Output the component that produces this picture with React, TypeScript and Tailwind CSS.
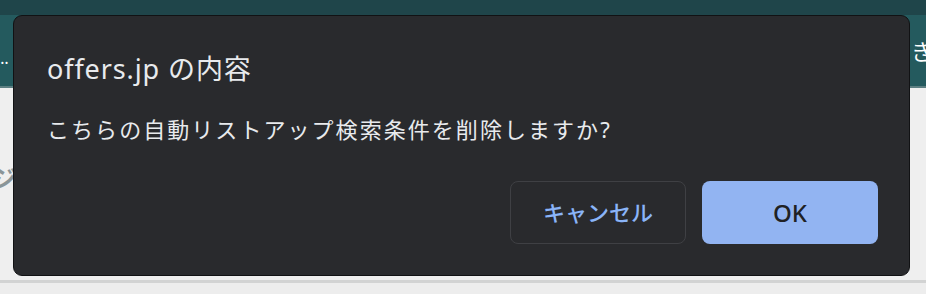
export default function App() {
  return (
    <div
      className="relative w-[926px] h-[294px] overflow-hidden bg-[#ededed]"
      style={{ fontFamily: '"Noto Sans", "Noto Sans CJK JP", sans-serif' }}
    >
      {/* page behind the dialog */}
      <div className="h-[15px] bg-[#1f454a]" />
      <div className="flex h-[71px] items-center justify-between bg-[#245a5e] pt-[14px] text-white">
        <span className="-ml-[4px] text-[16px] leading-none">…</span>
        <span className="-mr-[7px] -mt-[14px] text-[22px] leading-none">き</span>
      </div>
      <div className="h-[2px] bg-[#5c7f82]" />
      <div className="flex h-[192px] items-center bg-[#efefef] pb-[10px]">
        <span className="-ml-[8px] text-[24px] font-bold leading-none text-[#8a9598]">ジ</span>
      </div>
      <div className="h-[3px] bg-[#d2d3d3]" />

      {/* dialog */}
      <div className="absolute left-[13px] top-[15px] flex w-[897px] h-[261px] flex-col rounded-[9px] border border-[#111214] bg-[#292a2d] pl-[33px] pr-[31px] pt-[34px]">
        <div className="text-[27px] leading-[38px] tracking-[0.9px] text-[#e8eaed]">offers.jp の内容</div>
        <div className="mt-[25px] text-[22px] leading-[32px] text-[#e8eaed] tracking-[2.05px]">
          こちらの自動リストアップ検索条件を削除しますか?
        </div>
        <div className="mt-[36px] flex justify-end gap-[16px]">
          <button className="w-[176px] h-[63px] rounded-[8px] border border-[#3f4044] bg-transparent text-[22px] font-medium text-[#8ab4f8]">
            キャンセル
          </button>
          <button className="w-[176px] h-[63px] rounded-[8px] bg-[#92b4f2] text-[24px] font-medium text-[#202124]">
            OK
          </button>
        </div>
      </div>
    </div>
  );
}
